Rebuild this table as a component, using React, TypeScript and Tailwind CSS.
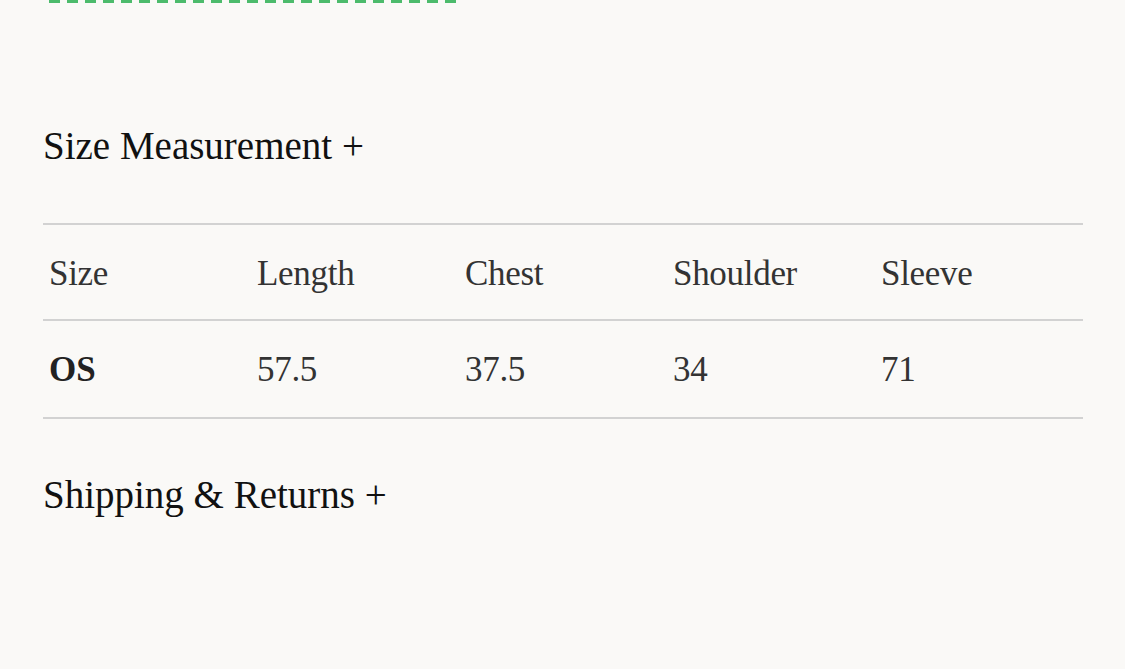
const headers = ['Size', 'Length', 'Chest', 'Shoulder', 'Sleeve']
const row = ['OS', '57.5', '37.5', '34', '71']

export default function App() {
  return (
    <div className="h-[669px] w-[1125px] overflow-hidden bg-[#faf9f7] font-['Liberation_Serif',serif]">
      {/* tail of the progress stripe above */}
      <div className="ml-[49px] h-[3px] w-[414px] bg-[repeating-linear-gradient(90deg,#4cbb6c_0_11px,transparent_11px_18px)]" />

      <div className="pl-[43px] pr-[42px]">
        <h2 className="mt-[119px] text-[39px] leading-[48px] text-[#111]">Size Measurement +</h2>

        <table className="mt-[53px] w-full table-fixed border-collapse text-[35px] text-[#333]">
          <thead>
            <tr className="border-y-2 border-[#d2d2d2]">
              {headers.map((h) => (
                <th key={h} className="h-[96px] pl-[6px] pt-[4px] text-left font-normal tracking-[-0.3px]">
                  {h}
                </th>
              ))}
            </tr>
          </thead>
          <tbody>
            <tr className="border-b-2 border-[#d2d2d2]">
              {row.map((v, i) => (
                <td
                  key={v}
                  className={i === 0 ? 'h-[98px] pl-[6px] pt-[3px] font-bold text-[#222]' : 'h-[98px] pl-[6px] pt-[3px] tracking-[-0.3px]'}
                >
                  {v}
                </td>
              ))}
            </tr>
          </tbody>
        </table>

        <h2 className="mt-[52px] text-[39px] leading-[48px] text-[#111]">Shipping &amp; Returns +</h2>
      </div>
    </div>
  )
}
